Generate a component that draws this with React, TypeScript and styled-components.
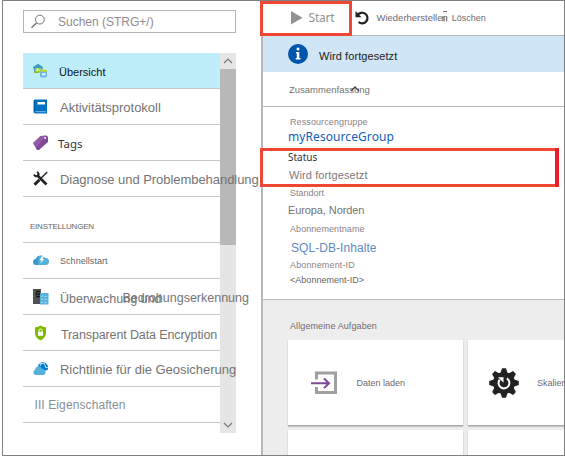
import React from "react";
import styled, { createGlobalStyle } from "styled-components";

const Global = createGlobalStyle`
  * { box-sizing: border-box; }
  body { margin: 0; background: #fff; font-family: "Liberation Sans", Arial, sans-serif; }
  svg { display: block; flex: none; }
`;

const Window = styled.div`
  width: 563px;
  height: 456px;
  margin-left: 2px;
  border: 1px solid #808080;
  display: flex;
  overflow: hidden;
  background: #fff;
`;

const Sidebar = styled.aside`
  width: 258px;
  flex: none;
  padding: 9px 0 0 20px;
`;

const Search = styled.div`
  width: 213px;
  height: 23px;
  border: 1px solid #b4b4b4;
  display: flex;
  align-items: center;
  padding-left: 6px;
`;

const Text = styled.span<{ $size: number; $color?: string; $gap?: number; $ui?: boolean; $ml?: number; $dy?: number }>`
  font-family: ${(p) => (p.$ui ? '"Noto Sans", sans-serif' : '"Liberation Sans", Arial, sans-serif')};
  font-size: ${(p) => p.$size}px;
  line-height: 14px;
  letter-spacing: ${(p) => p.$gap ?? 0}px;
  color: ${(p) => p.$color ?? "#747474"};
  margin-left: ${(p) => p.$ml ?? 0}px;
  padding-top: ${(p) => p.$dy ?? 0}px;
  white-space: pre;
  flex: none;
`;

const MenuArea = styled.div`
  display: flex;
  margin-top: 20px;
  width: 213px;
  height: 380px;
`;

const Menu = styled.nav`
  width: 197px;
  flex: none;
  position: relative;
  z-index: 1;
`;

const Item = styled.div<{ $active?: boolean }>`
  height: 36px;
  border-bottom: 1px solid #c8c8c8;
  background: ${(p) => (p.$active ? "#bdeefa" : "transparent")};
  display: flex;
  align-items: center;
  padding-left: 10px;
`;

const SectionTitle = styled(Item)`
  height: 46px;
  padding: 14px 0 0 7px;
`;

const Scrollbar = styled.div`
  width: 16px;
  background: #e5e5e5;
  display: flex;
  flex-direction: column;
  justify-content: space-between;
`;

const ScrollButton = styled.div`
  height: 16px;
  display: flex;
  align-items: center;
  justify-content: center;
`;

const Thumb = styled.div`
  height: 176px;
  margin-bottom: auto;
  background: #b8b8b8;
`;

const Panel = styled.main`
  flex: 1;
  min-width: 0;
  border-left: 2px solid #b8b8b8;
  display: flex;
  flex-direction: column;
  position: relative;
`;

const Toolbar = styled.header`
  height: 35px;
  flex: none;
  border-bottom: 1px solid #b8b8b8;
  display: flex;
  align-items: center;
  padding-left: 28px;
`;

const RestoreGlyph = styled.svg`
  width: 16px;
  height: 16px;
  margin: 0 6px 0 20px;
`;

const Banner = styled.div`
  height: 36px;
  flex: none;
  background: #d0e5f5;
  display: flex;
  align-items: center;
  padding-left: 25px;
`;

const SummaryBar = styled.div`
  height: 35px;
  flex: none;
  border-bottom: 1px solid #b8b8b8;
  display: flex;
  align-items: center;
  padding-left: 26px;
`;

const Overlap = styled.span<{ $shift: number }>`
  position: relative;
  left: -${(p) => p.$shift}px;
  width: 0;
  flex: none;
`;

const Details = styled.section`
  height: 193px;
  flex: none;
  border-bottom: 1px solid #b8b8b8;
  padding: 8px 0 0 25px;
  display: flex;
  flex-direction: column;
  align-items: flex-start;
`;

const Line = styled.div<{ $before: number }>`
  height: 14px;
  margin-top: ${(p) => p.$before}px;
  display: flex;
  flex: none;
`;

const Tasks = styled.section`
  flex: 1;
  background: #ededed;
  overflow: hidden;
`;

const TasksTitle = styled.div`
  height: 40px;
  padding: 19px 0 0 27px;
  display: flex;
`;

const Cards = styled.div`
  display: grid;
  grid-template-columns: 175px 175px;
  grid-auto-rows: 85px;
  gap: 5px;
  padding-left: 25px;
`;

const Card = styled.div<{ $pad: number }>`
  background: #fff;
  box-shadow: 0 1px 1px #aaa, 0 2px 1px #ccc;
  display: flex;
  align-items: center;
  padding-left: ${(p) => p.$pad}px;
`;

const Highlight = styled.div<{ $top: number; $width: number; $height: number }>`
  position: absolute;
  left: -3px;
  top: ${(p) => p.$top}px;
  width: ${(p) => p.$width}px;
  height: ${(p) => p.$height}px;
  border: 3px solid #f04735;
  z-index: 2;
`;

const HighlightEnd = styled.div`
  position: absolute;
  right: -3px;
  top: -3px;
  width: 4px;
  height: 39px;
  background: #ed1c28;
`;

const SearchIcon = () => (
  <svg width="16" height="16" viewBox="0 0 16 16" fill="none" stroke="#747474">
    <circle cx="9.9" cy="5.6" r="4.4" />
    <path d="M6.700 8.800 1.500 13.700" strokeWidth="1.4" />
  </svg>
);
const DatabaseIcon = () => (
  <svg width="15" height="15" viewBox="0 0 15 15">
    <path d="M0 4 5 .8 10 4v1.4H0z" fill="#3e9bd0" />
    <path d="M1 5h1.5v4H1zM7.500 5H9v2H7.500z" fill="#3e9bd0" />
    <path d="M3 5h4.500v4H3z" fill="#a6d43d" />
    <path d="M4.500 5v4M3 7h4.500" stroke="#fff" strokeWidth=".6" />
    <path d="M1 8.500h5.500V10H1z" fill="#84bd24" />
    <path d="M7 8v5c0 2 7 2 7 0V8z" fill="#6db8e0" />
    <ellipse cx="10.500" cy="7.800" rx="3.500" ry="1.300" fill="#b8d432" />
    <path d="M9 10h3.500v2.500H9z" fill="#d8effb" />
  </svg>
);
const BookIcon = () => (
  <svg width="15" height="15" viewBox="0 0 15 15">
    <path d="M2 .5h12v14H2.300Q.5 14.500.5 12.500V2Q.5.5 2 .5z" fill="#0072c6" />
    <path d="M2.500 12.200H13v1H2.500z" fill="#7fb8e2" />
    <path d="M4.500 3h7.500v2.500H4.500z" fill="#fff" />
    <path d="M1.700 1v11" stroke="#005ba1" />
  </svg>
);
const TagIcon = () => (
  <svg width="15" height="15" viewBox="0 0 15 15">
    <path d="m0 8 7.500-7L13 .5q1.800.2 2 2V7L6 15H4z" fill="#804998" />
    <path d="m0 8 7.500-7L13 .5 3 13z" fill="#a46cb8" opacity=".5" />
    <circle cx="12.200" cy="3.100" r="1" fill="#fff" />
  </svg>
);
const ToolsIcon = () => (
  <svg width="15" height="15" viewBox="0 0 15 15" fill="none" stroke="#222">
    <path d="m4 4 9.500 9.500" strokeWidth="2.700" />
    <path d="M4.200.8 5.700 3 4.800 5 2.500 5.200.8 3.600" strokeWidth="1.900" />
    <path d="M14.200 1 8 7.200" strokeWidth="1.400" />
    <path d="m6.500 8.700-5 5" strokeWidth="3" />
  </svg>
);
const CloudIcon = () => (
  <svg width="16" height="15" viewBox="0 0 16 15">
    <path d="M3 12a3 3 0 0 1 0-5.700A4.800 4.800 0 0 1 12 5a3.500 3.500 0 0 1 1 7z" fill="#55b0da" />
    <path d="M0 9q0-3 3-3 1-3 3-3l-1 9H3Q0 12 0 9z" fill="#3697cb" />
    <path d="M9 3.300 6.400 7.200h2.100L7.200 10.500l4-4.400H9.200l2-2.800z" fill="#fff" />
  </svg>
);
const ServerIcon = () => (
  <svg width="16" height="16" viewBox="0 0 16 16">
    <path d="M0 0h8v15H0z" fill="#505050" />
    <path d="M2 2.500h5M2 5h5M2 7.500h5" stroke="#171717" strokeWidth="1.400" />
    <path d="M1.500 2.500h1M1.500 5h1M1.500 7.500h1" stroke="#86a83a" />
    <path d="M7 4h8.500v11.500H7z" fill="#55b0da" />
    <path d="m8 7 .8 1L10 6M8 10l.8 1L10 9M8 13l.8 1L10 12M11 7.500h3M11 10.500h3M11 13.500h3" stroke="#b7e3f5" strokeWidth=".6" fill="none" />
  </svg>
);
const ShieldIcon = () => (
  <svg width="15" height="16" viewBox="0 0 15 16">
    <path d="M7.500.5q3 2 5.500 1.700V8q0 4.500-5.500 7.500Q2 12.500 2 8V2.200Q4.500 2.500 7.500.5z" fill="#7fba00" />
    <path d="M5 6.800h5v4H5z" fill="#fff" />
    <path d="M6 7V5.500q0-1.500 1.500-1.500T9 5.500V7" stroke="#fff" fill="none" />
  </svg>
);
const GeoIcon = () => (
  <svg width="16" height="15" viewBox="0 0 16 15">
    <path d="M5 5a5 5 0 0 1 9-1.500Q16 6 14.500 9L11 10z" fill="#0078cc" />
    <path d="m6 3 5-1 2 5 2-1M9 2l-2 3" stroke="#d9effa" strokeWidth=".9" fill="none" />
    <path d="M2.500 14A2.600 2.600 0 0 1 2 9 3.700 3.700 0 0 1 9 7.500Q12.300 8 12.500 11T10 14z" fill="#55b0da" />
  </svg>
);
const Chevron = ({ d }: { d: string }) => (
  <svg width="10" height="8" viewBox="0 0 10 8" fill="none" stroke="#777" strokeWidth="1.200"><path d={d} /></svg>
);
const LoadIcon = () => (
  <svg width="27" height="24" viewBox="0 0 27 24" fill="none">
    <path d="M5.500 8.500V2h19v19.500h-19V16" stroke="#a0a0a0" strokeWidth="3" />
    <path d="M0 12.300h18M13 7.500l5 4.800-5 4.800" stroke="#804998" strokeWidth="2" />
  </svg>
);
const GearIcon = () => (
  <svg width="30" height="30" viewBox="-15 -15 30 30">
    {[0, 45, 90, 135].map((a) => (
      <path key={a} transform={`rotate(${a})`} d="M-3.500-10-2-14.800h4l1.500 4.800v20L2 14.800h-4L-3.500 10z" fill="#222" />
    ))}
    <circle r="11" fill="#222" />
    <path d="M2.800-4.600A5.400 5.400 0 1 1-4.300-3.300" fill="none" stroke="#fff" strokeWidth="2" />
    <path d="M-6-5.800h5.500v5.500z" fill="#fff" />
  </svg>
);
const RestoreIcon = () => (
  <RestoreGlyph viewBox="0 0 16 16">
    <path d="M3.500 5.500A5.300 5.300 0 1 1 4.600 12" fill="none" stroke="#222" strokeWidth="2.200" />
    <path d="M1.500 1v6.200h6z" fill="#222" />
  </RestoreGlyph>
);

interface Entry {
  label: string;
  icon: React.ReactNode;
  size: number;
  gap?: number;
  ml?: number;
  color?: string;
  ui?: boolean;
  active?: boolean;
  dy?: number;
}

const general: Entry[] = [
  { label: "Übersicht", icon: <DatabaseIcon />, size: 11, ml: 11, color: "#111", active: true, dy: 3 },
  { label: "Aktivitätsprotokoll", icon: <BookIcon />, size: 13, gap: -0.02, ml: 12, dy: 3 },
  { label: "Tags", icon: <TagIcon />, size: 11.5, ml: 10, color: "#333", ui: true, dy: 2 },
  { label: "Diagnose und Problembehandlung", icon: <ToolsIcon />, size: 13, gap: -0.05, ml: 12, dy: 2 },
];

const details: { text: string; size: number; before: number; gap?: number; color?: string; ml?: number; ui?: boolean }[] = [
  { text: "Ressourcengruppe", size: 9, before: 0, gap: 0.1, color: "#8a8389", ml: 2 },
  { text: "myResourceGroup", size: 12, before: 1, gap: 0.08, color: "#1260b5", ui: true },
  { text: "Status", size: 10, before: 6, color: "#333", ui: true },
  { text: "Wird fortgesetzt", size: 11, before: 4, gap: 0.1, color: "#7d797d", ml: 1 },
  { text: "Standort", size: 9, before: 4, color: "#8a8389", ml: 2 },
  { text: "Europa, Norden", size: 11, before: 3, gap: -0.1 },
  { text: "Abonnementname", size: 9, before: 5, gap: 0.07, color: "#8a8389", ml: 2 },
  { text: "SQL-DB-Inhalte", size: 12, before: 5, gap: 0.06, color: "#6289c6", ml: 3 },
  { text: "Abonnement-ID", size: 9, before: 3, gap: 0.14, color: "#8a8389", ml: 2 },
  { text: "<Abonnement-ID>", size: 9, before: 1, gap: 0.03, color: "#666", ml: 2 },
];

export default function App() {
  return (
    <>
      <Global />
      <Window>
        <Sidebar>
          <Search>
            <SearchIcon />
            <Text $size={12} $color="#918b91" $ml={12}>Suchen (STRG+/)</Text>
          </Search>
          <MenuArea>
            <Menu>
              {general.map((e) => (
                <Item key={e.label} $active={e.active}>
                  {e.icon}
                  <Text $size={e.size} $gap={e.gap} $ml={e.ml} $color={e.color} $ui={e.ui} $dy={e.dy}>{e.label}</Text>
                </Item>
              ))}
              <SectionTitle><Text $size={8} $gap={-0.22} $color="#666">EINSTELLUNGEN</Text></SectionTitle>
              <Item><CloudIcon /><Text $size={9} $gap={0.05} $ml={11} $color="#666">Schnellstart</Text></Item>
              <Item>
                <ServerIcon />
                <Text $size={12.5} $ml={11} $dy={5}>Überwachung und</Text>
                <Overlap $shift={39}><Text $size={12.5} $dy={4}>Bedrohungserkennung</Text></Overlap>
              </Item>
              <Item><ShieldIcon /><Text $size={12.5} $gap={-0.12} $ml={13} $dy={4}>Transparent Data Encryption</Text></Item>
              <Item><GeoIcon /><Text $size={13} $gap={-0.03} $ml={11} $dy={3}>Richtlinie für die Geosicherung</Text></Item>
              <Item><Text $size={12} $gap={0.1} $ml={1.5} $color="#849199">III Eigenschaften</Text></Item>
            </Menu>
            <Scrollbar>
              <ScrollButton><Chevron d="m1 6 4-4 4 4" /></ScrollButton>
              <Thumb />
              <ScrollButton><Chevron d="m1 2 4 4 4-4" /></ScrollButton>
            </Scrollbar>
          </MenuArea>
        </Sidebar>
        <Panel>
          <Toolbar>
            <svg width="12" height="14" viewBox="0 0 12 14"><path d="M0 0 11.500 6.800 0 13.500z" fill="#929292" /></svg>
            <Text $size={12} $gap={-0.2} $ui $ml={5.5} $color="#929292">Start</Text>
            <RestoreIcon />
            <Text $size={9.5} $color="#706970">Wiederherstellen</Text>
            <Overlap $shift={8}>
              <svg width="10" height="20" viewBox="0 0 10 20" fill="none" stroke="#777">
                <path d="M3 3.500h4" />
                <path d="M2.500 8v5.500M4.500 8v5.500M6.500 8v5.500" strokeWidth=".7" />
              </svg>
            </Overlap>
            <Text $size={9} $ml={4} $color="#706970">Löschen</Text>
          </Toolbar>
          <Banner>
            <svg width="20" height="20" viewBox="0 0 20 20">
              <circle cx="10" cy="10" r="10" fill="#0055ad" />
              <circle cx="10" cy="5" r="1.500" fill="#fff" />
              <path d="M8 8h3.300v6H12.500v1.500H7.700V14H8.800V9.500H8z" fill="#fff" />
            </svg>
            <Text $size={11} $gap={0.08} $ml={11} $color="#222" $dy={4}>Wird fortgesetzt</Text>
          </Banner>
          <SummaryBar>
            <Text $size={9.5} $dy={2}>Zusammenfassung</Text>
            <Overlap $shift={20}>
              <svg width="10" height="8" viewBox="0 0 10 8">
                <path d="m1 6 4-4 4 4" fill="none" stroke="#444" strokeWidth="1.300" />
              </svg>
            </Overlap>
          </SummaryBar>
          <Details>
            {details.map((d) => (
              <Line key={d.text} $before={d.before}>
                <Text $size={d.size} $gap={d.gap} $color={d.color} $ml={d.ml} $ui={d.ui}>{d.text}</Text>
              </Line>
            ))}
          </Details>
          <Tasks>
            <TasksTitle><Text $size={9} $gap={0.1} $color="#706970">Allgemeine Aufgaben</Text></TasksTitle>
            <Cards>
              <Card $pad={23}><LoadIcon /><Text $size={9} $ml={18.5} $color="#706970">Daten laden</Text></Card>
              <Card $pad={21}><GearIcon /><Text $size={9} $ml={18} $color="#706970">Skalieren</Text></Card>
              <Card $pad={0} />
              <Card $pad={0} />
            </Cards>
          </Tasks>
          <Highlight $top={0} $width={92} $height={35} />
          <Highlight $top={147} $width={299} $height={39}><HighlightEnd /></Highlight>
        </Panel>
      </Window>
    </>
  );
}
